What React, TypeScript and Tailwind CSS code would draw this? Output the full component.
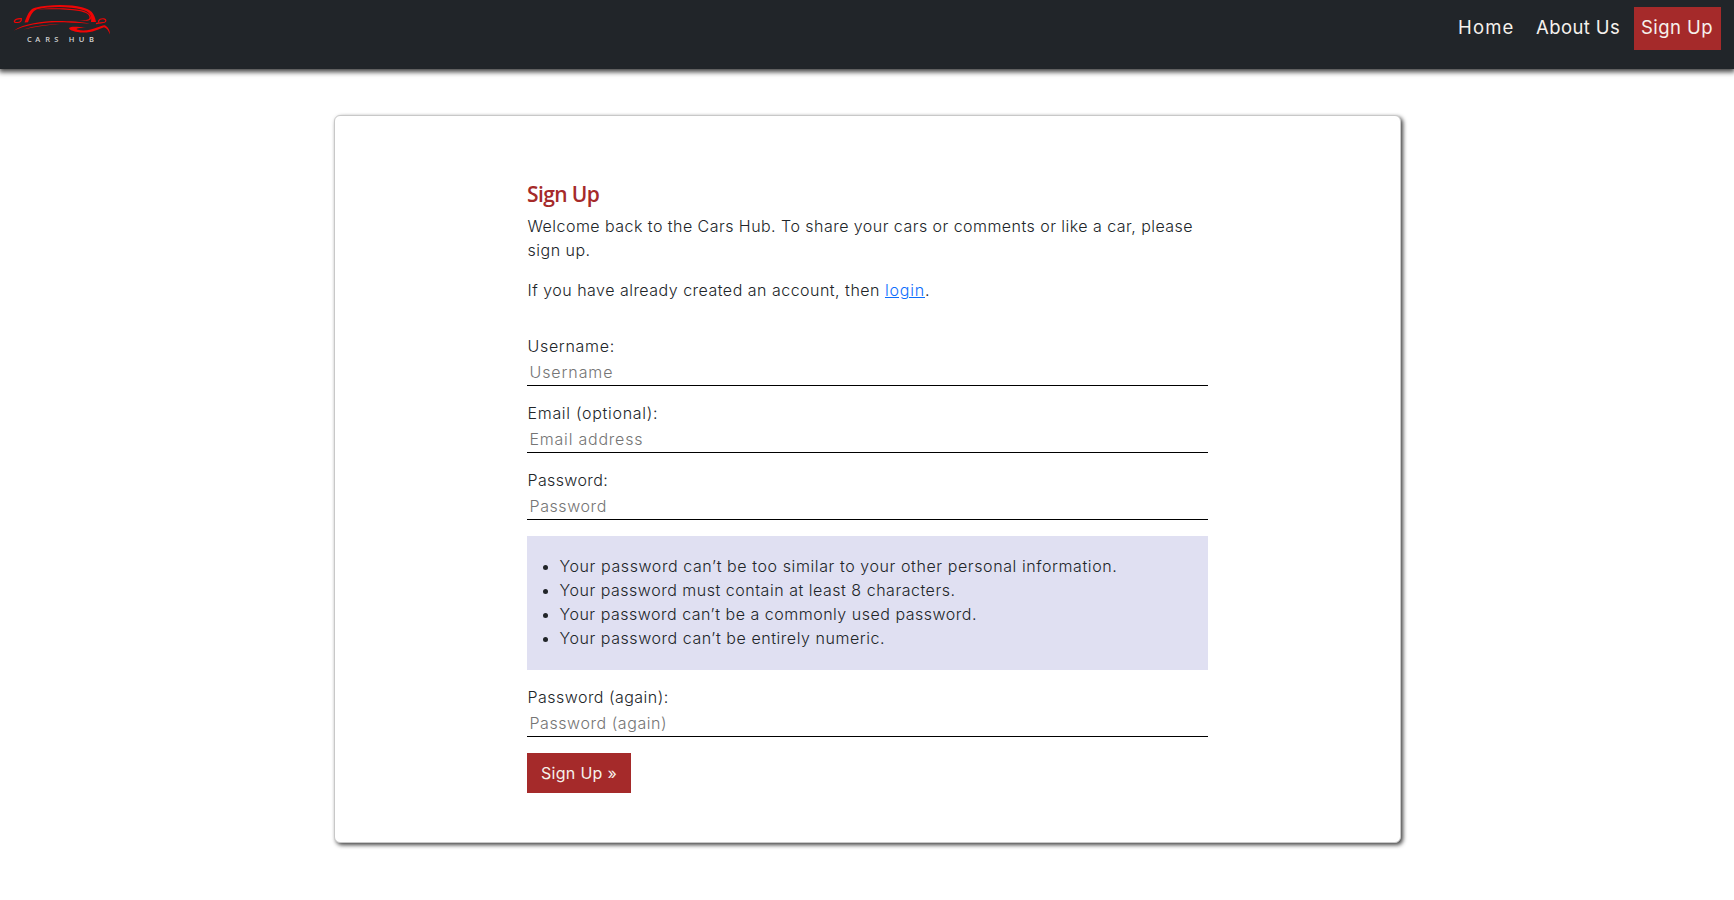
import type { ReactNode } from "react";

function Logo() {
  return (
    <svg width="130" height="50" viewBox="0 0 130 50" fill="none" role="img" aria-label="Cars Hub" className="block">
      <g fill="#f00505">
        <path d="M24.5 22.5 C27 16 29 9.500 35 7.800 C48 4.400 70 4.200 82 7.300 C91 9.500 94.500 13 96 22 L91 22 C92 14.500 89 11.500 82 9.800 C70 6.200 50 6.200 37 9.300 C32 11.500 30.500 16 28 22.200 Z" />
        <path d="M36 9.600 C50 7.800 68 8 80 10 C87 11.200 91.500 14.500 91 18.500 C90.500 20.800 86 21.200 79 20.900 C86 20.300 89.500 19.800 89.500 17.500 C89.300 14 86 12.300 79 10.900 C67 8.900 50 8.800 36 9.600 Z" />
        <path d="M14 30.500 C24 23.500 42 21 58 21 C70 21 82 21.700 90 23.800 C76 22.700 64 22.200 55 22.300 C40 22.800 25 25.300 14 30.500 Z" />
        <path d="M23.500 29.500 C34 25.500 48 24.300 60 24.200 C46 25.200 34 26.600 23.500 29.500 Z" />
        <path d="M69 28 C71 25.800 77 26.900 86 27 C79 28 75.500 28.300 77 29.600 C84 31.800 92 29.500 97 27.500 C101 26 103.500 24.800 105 25.300 C108.500 27.500 110 30.500 110 34.500 C108.500 30.500 107 28.300 104 27.200 C99 29 93 32.600 83 32.600 C76 32.300 69 30.500 69 28 Z" />
      </g>
      <g stroke="#f00505" strokeWidth="1.200">
        <path d="M14.300 21.300 C15.300 18.600 18.500 18.500 21.300 18.600 C21.600 21 20.500 22.400 17.500 22.500 C15.500 22.600 14.300 22.300 14.300 21.300 Z" />
        <path d="M98.500 22.200 C98.500 19.300 101 18.500 104 18.800 C106.300 19.200 106.500 21.600 104.500 22.300 C102.500 22.900 100 22.800 96 23.600" />
      </g>
      <text x="27 35.300 45.300 54.300 68.700 78.700 89" y="42.400" className="fill-[#d4d4d4] font-['Open_Sans'] text-[7.500px] font-semibold">
        CARSHUB
      </text>
    </svg>
  );
}

function Field({ label, placeholder, type = "text", labelClass, inputClass }: {
  label: string;
  placeholder: string;
  type?: string;
  labelClass: string;
  inputClass: string;
}) {
  return (
    <label className="block">
      <span className={`block h-6 pl-[0.5px] leading-6 ${labelClass}`}>{label}</span>
      <input
        type={type}
        placeholder={placeholder}
        className={`block h-7 w-full border-b border-black pr-[2px] pl-[2.5px] leading-5 outline-none placeholder:text-[#757575] ${inputClass}`}
      />
    </label>
  );
}

function Rule({ className, children }: { className: string; children: ReactNode }) {
  return <li className={`leading-6 ${className}`}>{children}</li>;
}

export default function App() {
  return (
    <div className="min-h-[900px] bg-white font-['Inter','Liberation_Sans',sans-serif] text-[16px] font-light text-[#212529]">
      <header className="flex h-[69px] items-start justify-between bg-[#212529] pr-[13px] shadow-[0_2px_5px_1px_rgba(0,0,0,0.75)]">
        <Logo />
        <nav className="flex pt-[7px] text-[18.5px] font-normal text-[#f5f1ec]">
          <a href="#" className="flex h-[43px] w-[71px] items-center pb-[2px] pl-[7px] tracking-[1.150px]">Home</a>
          <a href="#" className="ml-[6px] flex h-[43px] w-[99px] items-center pb-[2px] pl-[8px] tracking-[0.400px]">About Us</a>
          <a href="#" className="ml-[7px] flex h-[43px] w-[87px] items-center bg-[#a52a2a] pb-[2px] pl-[7px] tracking-[0.450px]">Sign Up</a>
        </nav>
      </header>

      <main className="mt-[46px] ml-[334px] h-[728px] w-[1067px] rounded-[6px] border border-[#c8c8c8] bg-white px-[192px] pt-[66px] shadow-[2px_2px_4px_rgba(0,0,0,0.75)]">
        <h1 className="h-8 font-['Open_Sans','Noto_Sans',sans-serif] text-[21px] leading-6 font-semibold tracking-[-0.600px] text-[#a52a2a]">Sign Up</h1>
        <p className="pl-[0.5px] leading-6">
          <span className="tracking-[0.460px]">Welcome back to the Cars Hub. To share your cars or comments or like a car, please</span>{" "}
          <span className="tracking-[0.500px]">sign up.</span>
        </p>
        <p className="mt-4 pl-[0.5px] leading-6 tracking-[0.490px]">
          If you have already created an account, then{" "}
          <a href="#" className="tracking-[0.800px] text-[#0d6efd] underline">login</a>.
        </p>

        <form className="mt-8 flex flex-col">
          <div className="flex flex-col gap-[15px]">
            <Field label="Username:" placeholder="Username" labelClass="tracking-[0.690px]" inputClass="tracking-[0.900px]" />
            <Field label="Email (optional):" placeholder="Email address" labelClass="tracking-[0.700px]" inputClass="tracking-[0.780px]" />
            <Field label="Password:" placeholder="Password" type="password" labelClass="tracking-[0.380px]" inputClass="tracking-[0.580px]" />
          </div>
          <ul className="mt-4 h-[134px] list-disc bg-[#e0e0f2] pt-[18px] pl-[32.5px]">
            <Rule className="tracking-[0.590px]">Your password can’t be too similar to your other personal information.</Rule>
            <Rule className="tracking-[0.520px]">Your password must contain at least 8 characters.</Rule>
            <Rule className="tracking-[0.510px]">Your password can’t be a commonly used password.</Rule>
            <Rule className="tracking-[0.550px]">Your password can’t be entirely numeric.</Rule>
          </ul>
          <div className="mt-[15px]">
            <Field label="Password (again):" placeholder="Password (again)" type="password" labelClass="tracking-[0.470px]" inputClass="tracking-[0.560px]" />
          </div>
          <button type="button" className="mt-4 h-10 w-[104px] bg-[#a52a2a] pl-[14px] text-left font-normal tracking-[0.300px] text-[#f5f1ec]">
            Sign Up »
          </button>
        </form>
      </main>
    </div>
  );
}
